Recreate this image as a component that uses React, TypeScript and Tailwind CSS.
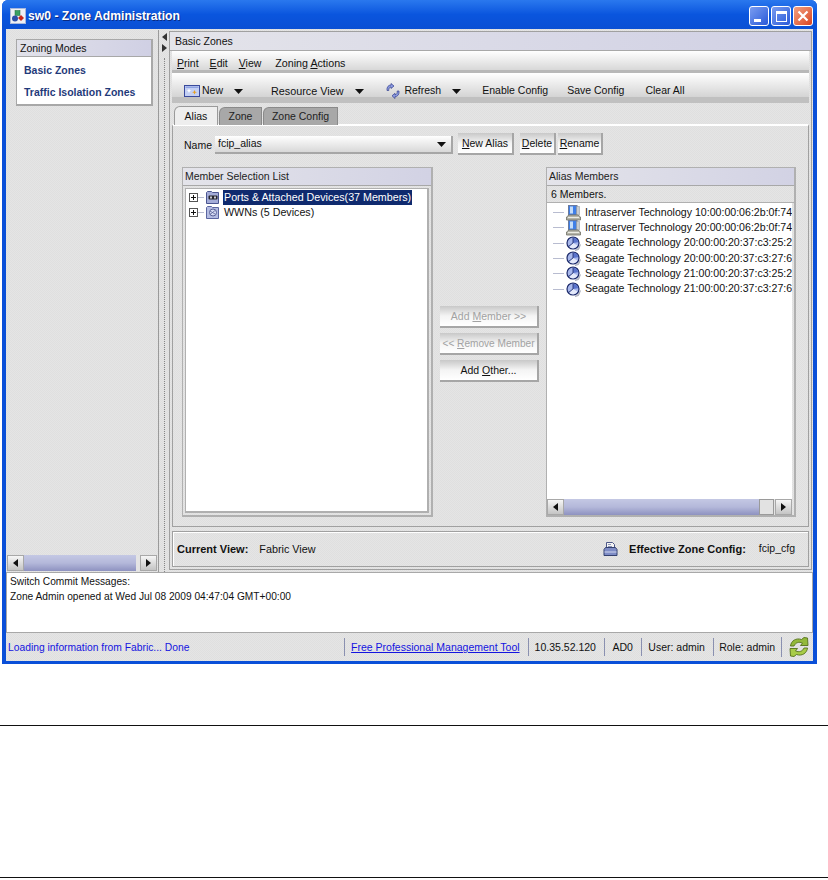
import React from 'react';

// checker fill that stands in for the 256 colour dither of the original capture
const dither = 'bg-[repeating-conic-gradient(#dfdfdf_0_25%,#e5e5e5_0_50%)] bg-[length:2px_2px]';

function AppIcon() {
  return (
    <svg width="16" height="16" viewBox="0 0 16 16" className="shrink-0">
      <rect x="0.5" y="0.5" width="15" height="15" fill="#eef0f4" stroke="#a8b8dc" />
      <rect x="5" y="2.500" width="5" height="5" fill="#3aa060" stroke="#1e6a3a" strokeWidth="0.5" />
      <circle cx="5" cy="10.500" r="3" fill="#2c4fa8" />
      <path d="M11 7l3 3-3 3-3-3z" fill="#c8281c" />
    </svg>
  );
}

function CaretDown({ className = '' }: { className?: string }) {
  return (
    <svg width="9" height="5" viewBox="0 0 9 5" className={className}>
      <path d="M0 0h9L4.5 5z" fill="#111" />
    </svg>
  );
}

function NewIcon() {
  return (
    <svg width="16" height="12" viewBox="0 0 16 12" className="shrink-0">
      <rect x="0.5" y="0.5" width="15" height="11" fill="#c4d0f4" stroke="#3a4a9c" />
      <rect x="1.500" y="1.500" width="13" height="1.500" fill="#8ea2e2" />
      <path d="M5 3.500l.8 1.700 1.700.5-1.700.5L5 8l-.8-1.800-1.700-.5 1.700-.5z" fill="#fff" />
      <path d="M10.500 5l.8 1.800 1.700.5-1.700.5-.8 1.700-.8-1.700-1.700-.5 1.700-.5z" fill="#e8a020" />
    </svg>
  );
}

function RefreshSmall() {
  return (
    <svg width="14" height="16" viewBox="0 0 14 16" className="shrink-0">
      <path d="M1 7.500C.5 4 2.500 2 5 2V.5l3 2.500-3 2.500V4C3.500 4 2.500 5.500 2.800 7.500z" fill="#8c9ae0" stroke="#34408e" strokeWidth="0.7" />
      <path d="M13 8c.5 3.500-1.500 5.700-4 5.700v1.800l-3-2.700 3-2.500v1.500c1.500 0 2.500-1.800 2.200-3.800z" fill="#8c9ae0" stroke="#34408e" strokeWidth="0.7" />
    </svg>
  );
}

function TreeExpander() {
  return (
    <svg width="15" height="9" viewBox="0 0 15 9" className="shrink-0">
      <rect x="0.5" y="0.5" width="8" height="8" fill="#fff" stroke="#555" />
      <path d="M2 4.500h5M4.500 2v5" stroke="#111" />
      <path d="M9 4.500h6" stroke="#b8bcd0" />
    </svg>
  );
}

function PortsIcon() {
  return (
    <svg width="14" height="13" viewBox="0 0 14 13" className="shrink-0">
      <path d="M.5 12.500V1.500l1-1h4l1 1h6v11z" fill="#a4acd8" stroke="#4a5590" />
      <rect x="2.500" y="4.500" width="9" height="4" rx="1" fill="#26262e" />
      <rect x="4" y="5.500" width="2" height="2" fill="#c8c8d0" />
      <rect x="8" y="5.500" width="2" height="2" fill="#c8c8d0" />
    </svg>
  );
}

function WwnIcon() {
  return (
    <svg width="14" height="13" viewBox="0 0 14 13" className="shrink-0">
      <path d="M.5 12.500V1.500l1-1h4l1 1h6v11z" fill="#b4bce2" stroke="#5a65a0" />
      <circle cx="7" cy="6.500" r="3.500" fill="#d4daf2" stroke="#5a6298" />
      <path d="M4 5l5 3M4 8.500l5-4" stroke="#5a6298" strokeWidth="0.8" />
    </svg>
  );
}

function ServerIcon() {
  return (
    <svg width="15" height="16" viewBox="0 0 15 16" className="shrink-0">
      <rect x="2.500" y="0.500" width="8.500" height="9.500" fill="#3f7fe8" stroke="#6a7a9c" />
      <rect x="4" y="1.500" width="3" height="7" fill="#c4dcf8" />
      <rect x="10.500" y="1.500" width="3" height="8.500" fill="#c8ccd0" stroke="#8a8f96" strokeWidth="0.5" />
      <path d="M.5 12l2.500-2h9l2.500 2v3H.5z" fill="#b4b4a8" stroke="#707064" strokeWidth="0.8" />
      <path d="M2 12.500h11" stroke="#ecece4" />
    </svg>
  );
}

function DiskIcon() {
  return (
    <svg width="16" height="15" viewBox="0 0 16 15" className="shrink-0">
      <path d="M14.500 8.500l-2 5-3.500 1" fill="#c4c8d4" stroke="#a8acb8" />
      <circle cx="7" cy="7" r="6" fill="#a8b8ec" stroke="#1c2a6a" strokeWidth="1.200" />
      <path d="M7 1.700V7l5.200-.8A5.300 5.300 0 0 0 7 1.700z" fill="#5a74cc" />
      <path d="M7 7l4.600 2.600A5.300 5.300 0 0 1 3.400 11z" fill="#e4e9fa" />
      <path d="M7 1.500V7l-4.500 3.500" fill="none" stroke="#1c2a6a" strokeWidth="0.8" />
    </svg>
  );
}

function PrinterIcon() {
  return (
    <svg width="15" height="15" viewBox="0 0 15 15" className="shrink-0">
      <path d="M3.500.5h6l2 2v4h-8z" fill="#f4f4f4" stroke="#4c5788" />
      <path d="M5 2.500h3M5 4.500h4" stroke="#8e96b8" />
      <path d="M1 7.500l1.500-2h10l1.500 2v6H1z" fill="#7e8cc6" stroke="#33406f" />
      <path d="M1.500 10h12" stroke="#d0d6ee" />
    </svg>
  );
}

function GreenRefresh() {
  return (
    <svg width="20" height="20" viewBox="0 0 20 20" className="shrink-0">
      <path d="M1.500 9C2 4 7 .5 12.500 2.500L15 .5 18.500 1l.5 7.500h-7.500l2-2.500C10 4.500 6.500 5.500 5 9z" fill="#93b93a" stroke="#54701a" strokeWidth="0.9" />
      <path d="M18.500 11c-.5 5-5.500 8.500-11 6.500L5 19.500 1.500 19 1 11.500h7.500l-2 2.500c3.500 1.500 7 .5 8.500-3z" fill="#a8cc48" stroke="#54701a" strokeWidth="0.9" />
    </svg>
  );
}

function ScrollArrow({ dir }: { dir: 'left' | 'right' }) {
  return (
    <div className="w-[17px] h-full shrink-0 flex items-center justify-center bg-gradient-to-b from-[#f6f6f6] to-[#c4c4c4] border border-[#a8a8a8]">
      <svg width="5" height="8" viewBox="0 0 5 8">
        <path d={dir === 'left' ? 'M5 0v8L0 4z' : 'M0 0v8l5-4z'} fill="#111" />
      </svg>
    </div>
  );
}

function ScrollBar({ thumb, knob = false }: { thumb: string; knob?: boolean }) {
  return (
    <div className="h-[16px] flex bg-[#e4e4e4] shrink-0">
      <ScrollArrow dir="left" />
      <div className={`h-full bg-gradient-to-b from-[#c4c8e4] via-[#b4b8da] to-[#8e92c0] ${thumb}`} />
      {knob && <div className="h-full w-[15px] bg-[#e2e2e2] border border-[#9a9a9a]" />}
      <div className="flex-1" />
      <ScrollArrow dir="right" />
    </div>
  );
}

function Btn({ children, className = '', disabled = false }: { children: React.ReactNode; className?: string; disabled?: boolean }) {
  return (
    <div
      className={`h-[22px] flex items-center justify-center pt-[2px] bg-gradient-to-b from-[#c8c8c8] via-[#f4f4f4] to-[#ffffff] border-r-2 border-b-2 border-[#a6a6a6] whitespace-nowrap ${disabled ? 'text-[#a2a2a2]' : 'text-[#111]'} ${className}`}
    >
      {children}
    </div>
  );
}

function PanelHeader({ children }: { children: React.ReactNode }) {
  return <div className="h-[18px] shrink-0 flex items-center pl-[2px] bg-gradient-to-r from-[#e4e4ea] to-[#d2d2e4] border-b border-[#a8a8a8] text-[#222]">{children}</div>;
}

const wwpns = [
  ['Intraserver Technology', '10:00:00:06:2b:0f:74', 'server'],
  ['Intraserver Technology', '20:00:00:06:2b:0f:74', 'server'],
  ['Seagate Technology', '20:00:00:20:37:c3:25:2c', 'disk'],
  ['Seagate Technology', '20:00:00:20:37:c3:27:6a', 'disk'],
  ['Seagate Technology', '21:00:00:20:37:c3:25:2c', 'disk'],
  ['Seagate Technology', '21:00:00:20:37:c3:27:6a', 'disk'],
];

export default function App() {
  return (
    <div className="w-[828px] h-[880px] bg-white font-['Liberation_Sans',Arial,sans-serif] text-[10.5px] text-[#111] overflow-hidden">
      {/* window */}
      <div className="ml-[2px] w-[815px] h-[664px] flex flex-col bg-[#0a4fd8] rounded-t-[6px] px-[4px] pb-[3px]">
        {/* title bar */}
        <div className="h-[29px] -mx-[4px] shrink-0 flex items-center pl-[8px] pr-[4px] rounded-t-[6px] bg-gradient-to-b from-[#2a78ee] via-[#0a55de] to-[#0a50d4]">
          <div className="pt-[3px] flex items-center">
            <AppIcon />
            <span className="ml-[2px] text-white font-bold text-[12.2px] [text-shadow:1px_1px_0_#0a2a80]">sw0 - Zone Administration</span>
          </div>
          <div className="ml-auto flex gap-[2px] pt-[3px]">
            <div className="w-[20px] h-[20px] rounded-[3px] border border-white bg-gradient-to-br from-[#7a9cf0] to-[#2a58d8] flex items-end pl-[4px] pb-[3px]">
              <div className="w-[7px] h-[3px] bg-white" />
            </div>
            <div className="w-[20px] h-[20px] rounded-[3px] border border-white bg-gradient-to-br from-[#7a9cf0] to-[#2a58d8] flex items-center justify-center">
              <div className="w-[11px] h-[11px] border border-white border-t-[3px]" />
            </div>
            <div className="w-[20px] h-[20px] rounded-[3px] border border-white bg-gradient-to-br from-[#f0a080] to-[#d8401c] flex items-center justify-center">
              <svg width="12" height="12" viewBox="0 0 12 12"><path d="M1.500 1.500l9 9M10.500 1.500l-9 9" stroke="#fff" strokeWidth="2.200" /></svg>
            </div>
          </div>
        </div>

        <div className={`flex-1 flex flex-col min-h-0 ${dither}`}>
          {/* main split */}
          <div className="h-[543px] shrink-0 flex pt-[1px]">
            {/* left pane */}
            <div className="w-[153px] shrink-0 flex flex-col pl-[1px] pt-[1px] border-r border-[#9a9a9a]">
              <div className="flex-1 pt-[8px] pl-[9px] pr-[5px]">
                <div className="h-[67px] border-r-2 border-b-2 border-l border-t border-[#a8a8a8] flex flex-col bg-white">
                  <div className="h-[17px] flex items-center pl-[3px] pt-[1px] bg-gradient-to-r from-[#e2e2ea] to-[#d0d0e4] border-b border-[#a8a8a8]">Zoning Modes</div>
                  <div className="pl-[7px] pt-[7px] flex flex-col gap-[9px] font-bold text-[#1f3a7a] leading-[13px]">
                    <span>Basic Zones</span>
                    <span className="whitespace-nowrap">Traffic Isolation Zones</span>
                  </div>
                </div>
              </div>
              <div className="pr-[1px] pb-[1px]">
                <ScrollBar thumb="w-[112px]" />
              </div>
            </div>

            {/* splitter */}
            <div className="w-[10px] shrink-0 flex flex-col items-center pt-[3px] gap-[3px]">
              <svg width="5" height="8" viewBox="0 0 5 8"><path d="M5 0v8L0 4z" fill="#333" /></svg>
              <svg width="5" height="8" viewBox="0 0 5 8"><path d="M0 0v8l5-4z" fill="#333" /></svg>
              <div className="flex-1 mt-[3px] border-l border-dotted border-[#888]" />
            </div>

            {/* right panel */}
            <div className="flex-1 min-w-0 flex flex-col border border-[#a0a0a0] mr-[1px] mb-[2px] mt-[1px] px-[2px]">
              <div className="h-[19px] -mx-[2px] shrink-0 flex items-center pl-[5px] pt-[2px] bg-gradient-to-r from-[#e4e4ea] to-[#d0d0e4] border-b border-[#a8a8a8]">Basic Zones</div>

              <div className="h-[22px] shrink-0 flex items-center gap-[11px] pl-[5px] pt-[6px] bg-gradient-to-b from-white to-[#d8d8d8] border-b-[3px] border-[#b8b8b8]">
                <span><u>P</u>rint</span>
                <span><u>E</u>dit</span>
                <span><u>V</u>iew</span>
                <span className="ml-[3px] text-[10.7px]">Zoning <u>A</u>ctions</span>
              </div>

              <div className="h-[30px] shrink-0 flex items-center pl-[12px] pt-[12px] bg-gradient-to-b from-white to-[#d4d4d4] border-b-[6px] border-[#c0c0c0]">
                <NewIcon />
                <span className="ml-[2px]">New</span>
                <CaretDown className="ml-[11px]" />
                <span className="ml-[28px] text-[10.8px]">Resource View</span>
                <CaretDown className="ml-[12px]" />
                <span className="ml-[22px]"><RefreshSmall /></span>
                <span className="ml-[4px]">Refresh</span>
                <CaretDown className="ml-[11px]" />
                <span className="ml-[21px]">Enable Config</span>
                <span className="ml-[19px]">Save Config</span>
                <span className="ml-[21px]">Clear All</span>
              </div>

              {/* tabs */}
              <div className="h-[22px] shrink-0 flex items-end pl-[2px] gap-[1px] -mb-[1px] relative z-10">
                <div className="w-[44px] h-[19px] flex items-center justify-center pt-[2px] bg-[#eeeeee] border border-b-0 border-[#9a9a9a] rounded-tl-[6px]">Alias</div>
                <div className="w-[43px] h-[18px] flex items-center justify-center pt-[1px] bg-[#a8a8a8] border border-b-0 border-[#8a8a8a] rounded-tl-[6px] text-[#222]">Zone</div>
                <div className="w-[75px] h-[18px] flex items-center justify-center pt-[1px] bg-[#a8a8a8] border border-b-0 border-[#8a8a8a] rounded-tl-[6px] text-[#222]">Zone Config</div>
              </div>

              {/* tab body */}
              <div className="h-[403px] shrink-0 flex flex-col border-t-2 border-t-white border-r border-b border-l border-[#a0a0a0] pl-[9px] pr-[7px]">
                <div className="h-[22px] mt-[7px] shrink-0 flex items-center">
                  <span className="ml-[2px] w-[31px] pt-[3px]">Name</span>
                  <div className="w-[238px] h-[18px] mt-[1px] flex items-center justify-between pl-[3px] pr-[5px] pt-[1px] bg-gradient-to-b from-white to-[#d8d8d8] border-r-2 border-b-2 border-[#a6a6a6]">
                    <span>fcip_alias</span>
                    <CaretDown />
                  </div>
                  <Btn className="ml-[5px] w-[56px]"><span><u>N</u>ew Alias</span></Btn>
                  <Btn className="ml-[6px] w-[36px]"><span><u>D</u>elete</span></Btn>
                  <Btn className="ml-[2px] w-[45px]"><span><u>R</u>ename</span></Btn>
                </div>

                <div className="flex-1 mt-[12px] mb-[9px] flex min-h-0">
                  {/* member selection */}
                  <div className="w-[251px] h-[350px] flex flex-col border-l border-t border-r-2 border-b-2 border-[#b0b0b0]">
                    <PanelHeader>Member Selection List</PanelHeader>
                    <div className="flex-1 m-[2px] bg-white border-l border-t border-r-2 border-b-2 border-[#b0b0b0] pl-[3px] pt-[1px] leading-[15px]">
                      <div className="flex items-center h-[15px]">
                        <TreeExpander />
                        <span className="ml-[2px]"><PortsIcon /></span>
                        <span className="ml-[3px] px-[1px] bg-[#0f2a6e] text-white text-[10.7px] whitespace-nowrap">Ports &amp; Attached Devices(37 Members)</span>
                      </div>
                      <div className="flex items-center h-[15px]">
                        <TreeExpander />
                        <span className="ml-[2px]"><WwnIcon /></span>
                        <span className="ml-[3px] pl-[1px] text-[10.7px]">WWNs (5 Devices)</span>
                      </div>
                    </div>
                  </div>

                  {/* add / remove */}
                  <div className="w-[99px] mx-[7px] pt-[139px] flex flex-col gap-[5px]">
                    <Btn disabled><span>Add <u>M</u>ember &gt;&gt;</span></Btn>
                    <Btn disabled className="text-[10.1px]"><span>&lt;&lt; <u>R</u>emove Member</span></Btn>
                    <Btn><span>Add <u>O</u>ther...</span></Btn>
                  </div>

                  {/* alias members */}
                  <div className="w-[250px] h-[350px] flex flex-col border-l border-t border-r-2 border-b-2 border-[#b0b0b0]">
                    <PanelHeader>Alias Members</PanelHeader>
                    <div className="h-[17px] shrink-0 flex items-center pl-[4px] pt-[1px] border-b border-[#b0b0b0]">6 Members.</div>
                    <div className="flex-1 flex flex-col min-h-0 bg-white mr-[2px]">
                      <div className="flex-1 min-h-0 overflow-hidden pl-[6px] pt-[2px]">
                        {wwpns.map(([vendor, wwn, kind], i) => (
                          <div key={i} className="h-[15.3px] flex items-center whitespace-nowrap text-[10.6px]">
                            <div className="w-[11px] h-px bg-[#b8bcd0] mr-[2px] shrink-0" />
                            {kind === 'server' ? <ServerIcon /> : <DiskIcon />}
                            <span className={kind === 'server' ? 'ml-[4px]' : 'ml-[3px]'}>{vendor} {wwn}</span>
                          </div>
                        ))}
                      </div>
                      <ScrollBar thumb="w-[195px]" knob />
                    </div>
                  </div>
                </div>
              </div>

              {/* footer */}
              <div className="h-[36px] mt-[4px] shrink-0 flex items-center pl-[4px] pr-[13px] border border-[#a0a0a0] shadow-[inset_1px_1px_0_#fff] text-[11px]">
                <span className="font-bold">Current View:</span>
                <span className="ml-[11px] text-[10.8px]">Fabric View</span>
                <span className="ml-auto"><PrinterIcon /></span>
                <span className="ml-[11px] font-bold">Effective Zone Config:</span>
                <span className="ml-[13px] text-[10.5px]">fcip_cfg</span>
              </div>
            </div>
          </div>

          {/* commit messages */}
          <div className="h-[61px] shrink-0 bg-white border border-[#a8a8a8] pl-[3px] pt-[1px] leading-[15px] text-[10.2px]">
            <div>Switch Commit Messages:</div>
            <div>Zone Admin opened at Wed Jul 08 2009 04:47:04 GMT+00:00</div>
          </div>

          {/* status bar */}
          <div className="flex-1 flex items-center pl-[2px] pr-[4px]">
            <span className="w-[337px] text-[#1414e0] whitespace-nowrap text-[10.3px] pt-[2px]">Loading information from Fabric... Done</span>
            <div className="h-[18px] border-l border-[#8a90b0] pl-[6px] w-[184px]">
              <span className="text-[#1414e0] underline whitespace-nowrap leading-[18px]">Free Professional Management Tool</span>
            </div>
            <div className="h-[18px] border-l border-[#8a90b0] pl-[6px] w-[77px] leading-[18px]">10.35.52.120</div>
            <div className="h-[18px] border-l border-[#8a90b0] pl-[7px] w-[37px] leading-[18px]">AD0</div>
            <div className="h-[18px] border-l border-[#8a90b0] pl-[6px] w-[72px] leading-[18px]">User: admin</div>
            <div className="h-[18px] border-l border-[#8a90b0] pl-[5px] w-[68px] leading-[18px]">Role: admin</div>
            <div className="h-[20px] border-l border-[#8a90b0] pl-[7px] flex items-center"><GreenRefresh /></div>
          </div>
        </div>
      </div>

      {/* page rules */}
      <div className="mt-[61px] h-px bg-[#111]" />
      <div className="mt-[151px] h-px bg-[#111]" />
    </div>
  );
}
